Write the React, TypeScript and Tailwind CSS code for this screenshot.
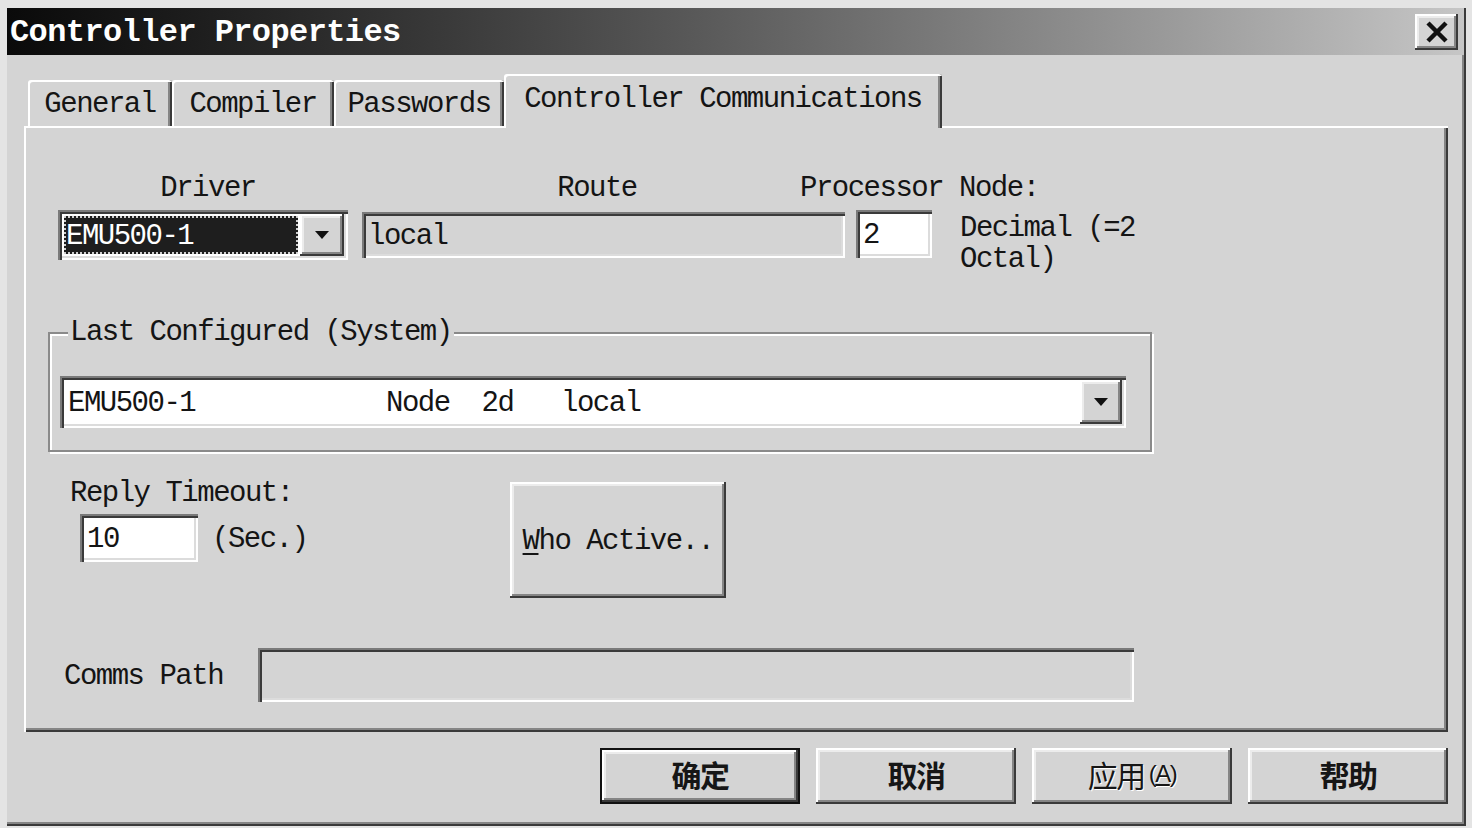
import React from "react";

const MONO =
  "font-['Liberation_Mono','DejaVu_Sans_Mono',monospace] text-[29px] tracking-[-1.5px] leading-[32px] text-[#141414]";
const CJK =
  "font-['Noto_Sans_CJK_SC','Noto_Sans_CJK_JP',sans-serif] text-[30px] font-bold leading-[36px] text-[#161616] pb-[4px]";
const RAISED =
  "bg-[#d4d4d4] shadow-[inset_-2px_-2px_0_#3a3a3a,inset_2px_2px_0_#ffffff,inset_-4px_-4px_0_#858585,inset_4px_4px_0_#ececec]";
const SUNKEN =
  "shadow-[inset_2px_2px_0_#7a7a7a,inset_4px_4px_0_#3a3a3a,inset_-2px_-2px_0_#ffffff,inset_-4px_-4px_0_#dcdcdc]";
const TAB =
  "bg-[#d4d4d4] rounded-t-[3px] shadow-[inset_2px_2px_0_#ffffff,inset_-2px_0_0_#3a3a3a,inset_-4px_0_0_#858585] flex items-center justify-center whitespace-nowrap";

function Arrow() {
  return (
    <svg width="16" height="10" viewBox="0 0 16 10">
      <polygon points="1,1 15,1 8,9" fill="#111" />
    </svg>
  );
}

function CloseX() {
  return (
    <svg width="24" height="22" viewBox="0 0 24 22">
      <path d="M3 2 L21 20 M21 2 L3 20" stroke="#111" strokeWidth="4.5" fill="none" />
    </svg>
  );
}

export default function App() {
  return (
    <div className={`w-[1472px] h-[828px] bg-[#e4e4e4] pt-[8px] pl-[7px] overflow-hidden ${MONO}`}>
      <div className="w-[1459px] h-[818px] bg-[#d4d4d4] flex flex-col shadow-[inset_-2px_-2px_0_#3a3a3a,inset_-4px_-4px_0_#858585]">
        {/* Title bar */}
        <div className="h-[47px] mr-[2px] flex items-center justify-between bg-gradient-to-r from-[#0a0a0a] via-[#5e5e5e] to-[#c6c6c6] pl-[3px] pr-[6px]">
          <div className="font-['Liberation_Mono',monospace] text-[32px] font-bold tracking-[-0.6px] leading-[34px] text-white whitespace-nowrap pt-[3px]">
            Controller Properties
          </div>
          <div className={`w-[43px] h-[36px] ${RAISED} flex items-center justify-center`}>
            <CloseX />
          </div>
        </div>

        {/* Tabs */}
        <div className="mt-[19px] h-[54px] -mb-[2px] flex items-end pl-[21px] relative z-10">
          <div className={`${TAB} w-[144px] h-[46px] mb-[2px] pt-[4px]`}>General</div>
          <div className={`${TAB} w-[162px] h-[46px] mb-[2px] pt-[4px]`}>Compiler</div>
          <div className={`${TAB} w-[170px] h-[46px] mb-[2px] pt-[4px]`}>Passwords</div>
          <div className={`${TAB} w-[438px] h-[54px] pb-[2px]`}>Controller Communications</div>
        </div>

        {/* Panel */}
        <div className="ml-[17px] w-[1424px] h-[606px] bg-[#d4d4d4] shadow-[inset_2px_2px_0_#ffffff,inset_-2px_-2px_0_#3a3a3a,inset_-4px_-4px_0_#858585] flex flex-col">
          {/* Labels row */}
          <div className="flex mt-[47px] h-[32px]">
            <div className="ml-[39px] w-[290px] text-center">Driver</div>
            <div className="ml-[9px] w-[470px] text-center">Route</div>
            <div className="-ml-[32px] whitespace-nowrap">Processor Node:</div>
          </div>

          {/* Controls row */}
          <div className="flex mt-[5px] h-[50px] items-start">
            <div className={`ml-[34px] w-[290px] h-[50px] bg-white flex p-[4px] ${SUNKEN}`}>
              <div className="flex-1 m-[2px] bg-[#1e1e1e] border-2 border-dotted border-[#cfcfcf] flex items-center pt-[4px] text-white whitespace-nowrap overflow-hidden">
                EMU500-1
              </div>
              <div className={`w-[44px] ${RAISED} flex items-center justify-center`}>
                <Arrow />
              </div>
            </div>
            <div className={`ml-[14px] mt-[2px] w-[483px] h-[46px] bg-[#d4d4d4] flex items-center pl-[6px] pt-[3px] ${SUNKEN}`}>
              local
            </div>
            <div className={`ml-[11px] w-[76px] h-[48px] bg-white flex items-center pl-[7px] pt-[3px] ${SUNKEN}`}>
              2
            </div>
            <div className="ml-[28px] mt-[3px] leading-[31px] whitespace-nowrap">
              <div>Decimal (=2</div>
              <div>Octal)</div>
            </div>
          </div>

          {/* Group box */}
          <div className="mt-[72px] ml-[24px] w-[1104px] h-[120px] relative border-2 border-[#8a8a8a] shadow-[inset_2px_2px_0_#ffffff,2px_2px_0_#ffffff]">
            <div className="absolute left-[18px] -top-[17px] px-[2px] bg-[#d4d4d4] whitespace-nowrap">
              Last Configured (System)
            </div>
            <div className={`mt-[42px] ml-[10px] w-[1066px] h-[52px] bg-white flex p-[4px] ${SUNKEN}`}>
              <div className="flex-1 flex items-center pl-[4px] pt-[4px] whitespace-pre">
                {"EMU500-1            Node  2d   local"}
              </div>
              <div className={`w-[42px] ${RAISED} flex items-center justify-center`}>
                <Arrow />
              </div>
            </div>
          </div>

          {/* Reply timeout + Who Active */}
          <div className="mt-[23px] flex items-start">
            <div className="ml-[46px] w-[440px] flex flex-col">
              <div className="h-[32px] pt-[3px] whitespace-nowrap">Reply Timeout:</div>
              <div className="mt-[7px] flex items-center">
                <div className={`ml-[10px] w-[118px] h-[48px] bg-white flex items-center pl-[7px] pt-[4px] ${SUNKEN}`}>
                  10
                </div>
                <div className="ml-[14px] pt-[4px] whitespace-nowrap">(Sec.)</div>
              </div>
            </div>
            <div className={`mt-[7px] w-[216px] h-[116px] ${RAISED} flex items-center justify-center pt-[4px] whitespace-nowrap`}>
              <span className="underline decoration-2 underline-offset-[4px]">W</span>ho Active..
            </div>
          </div>

          {/* Comms path */}
          <div className="mt-[50px] h-[54px] flex items-center">
            <div className="ml-[40px] w-[194px] pt-[4px] whitespace-nowrap">Comms Path</div>
            <div className={`w-[876px] h-[54px] bg-[#d4d4d4] ${SUNKEN}`}></div>
          </div>
        </div>

        {/* Bottom buttons */}
        <div className="mt-[16px] h-[56px] flex justify-end gap-[16px] pr-[18px]">
          <div className="w-[200px] h-[56px] border-2 border-[#111]">
            <div className={`w-full h-full ${RAISED} flex items-center justify-center ${CJK}`}>确定</div>
          </div>
          <div className={`w-[200px] h-[56px] ${RAISED} flex items-center justify-center ${CJK}`}>取消</div>
          <div
            className={`w-[200px] h-[56px] ${RAISED} flex items-center justify-center ${CJK} text-[#9c9c9c] [text-shadow:1px_1px_0_#ffffff] font-normal`}
          >
            应用
            <span className="text-[24px] ml-[4px] font-['Liberation_Sans',sans-serif]">
              (<span className="underline">A</span>)
            </span>
          </div>
          <div className={`w-[200px] h-[56px] ${RAISED} flex items-center justify-center ${CJK}`}>帮助</div>
        </div>
      </div>
    </div>
  );
}
